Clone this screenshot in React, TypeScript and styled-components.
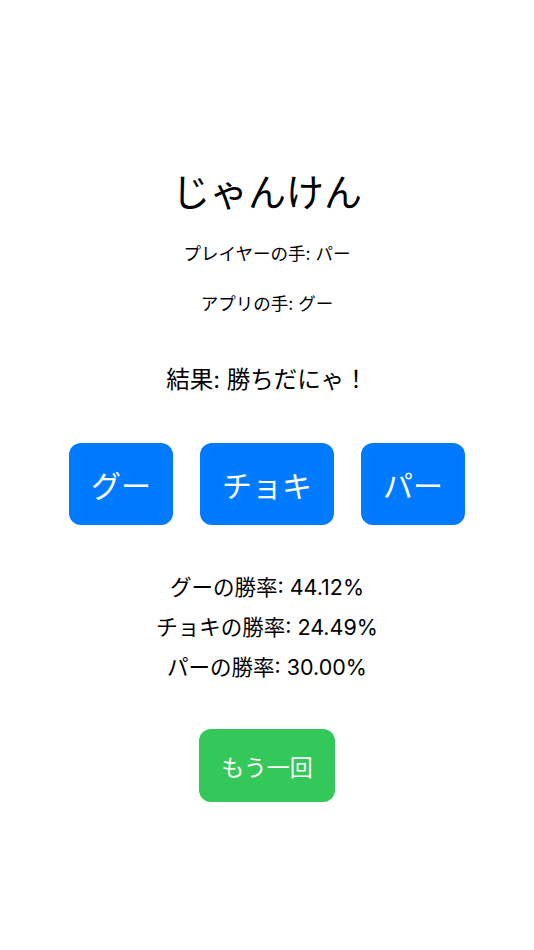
import React, { FC } from 'react'
import styled, { createGlobalStyle } from 'styled-components'

const GlobalStyle = createGlobalStyle`
  body {
    margin: 0;
    background: #ffffff;
    font-family: Inter, 'Noto Sans CJK JP', sans-serif;
    color: #000000;
  }
`

const Screen = styled.div`
  width: 534px;
  height: 950px;
  display: flex;
  flex-direction: column;
  align-items: center;
  padding-top: 170px;
  box-sizing: border-box;
`

const Title = styled.h1`
  margin: 0;
  font-size: 38px;
  line-height: 44px;
  font-weight: 400;
`

const Hand = styled.p`
  margin: 30px 0 0;
  font-size: 17.5px;
  line-height: 20px;
`

const Result = styled.p`
  margin: 52px 0 0;
  font-size: 23.5px;
  line-height: 28px;
`

const ButtonRow = styled.div`
  display: flex;
  gap: 27px;
  margin-top: 49px;
`

const ActionButton = styled.button<{ $color: string; $size: number; $height: number }>`
  height: ${({ $height }) => $height}px;
  padding: 0 22px;
  border: none;
  border-radius: 12px;
  background: ${({ $color }) => $color};
  color: #ffffff;
  font-family: inherit;
  font-size: ${({ $size }) => $size}px;
  cursor: pointer;
`

const Stats = styled.div`
  margin-top: 42px;
  display: flex;
  flex-direction: column;
  align-items: center;
`

const StatLine = styled.div`
  font-size: 21.5px;
  line-height: 40px;
`

const ResetWrap = styled.div`
  margin-top: 42px;
`

const hands = ['グー', 'チョキ', 'パー']

const rates = [
  { hand: 'グー', rate: '44.12%' },
  { hand: 'チョキ', rate: '24.49%' },
  { hand: 'パー', rate: '30.00%' },
]

const App: FC = () => {
  return (
    <>
      <GlobalStyle />
      <Screen>
        <Title>じゃんけん</Title>
        <Hand>プレイヤーの手: パー</Hand>
        <Hand>アプリの手: グー</Hand>
        <Result>結果: 勝ちだにゃ！</Result>
        <ButtonRow>
          {hands.map((h) => (
            <ActionButton key={h} $color='#007aff' $size={30} $height={82}>
              {h}
            </ActionButton>
          ))}
        </ButtonRow>
        <Stats>
          {rates.map(({ hand, rate }) => (
            <StatLine key={hand}>
              {hand}の勝率: {rate}
            </StatLine>
          ))}
        </Stats>
        <ResetWrap>
          <ActionButton $color='#34c759' $size={23} $height={73}>
            もう一回
          </ActionButton>
        </ResetWrap>
      </Screen>
    </>
  )
}

export default App
